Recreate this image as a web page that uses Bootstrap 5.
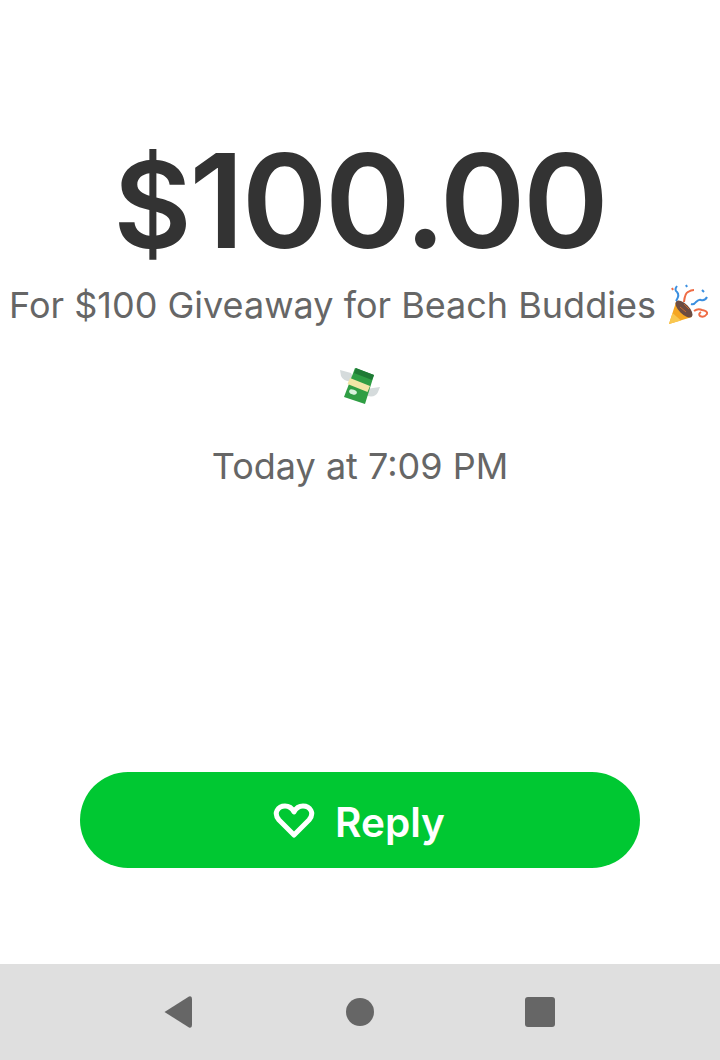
<!DOCTYPE html>
<html lang="en">
<head>
    <meta charset="UTF-8">
    <title>Payment</title>
    <link href="https://cdn.jsdelivr.net/npm/bootstrap@5.3.0/dist/css/bootstrap.min.css" rel="stylesheet">
    <style>
        body {
            background-color: #fff;
            font-family: Inter, "Liberation Sans", sans-serif;
            height: 1060px;
            overflow: hidden;
        }
        .screen-body { height: 964px; padding-top: 129px; }
        .amount {
            color: #333;
            font-size: 130px;
            font-weight: 600;
            line-height: 144px;
            height: 144px;
            letter-spacing: -2.5px;
        }
        .amount-sign { font-size: 120px; }
        .note {
            color: #666;
            font-size: 36px;
            line-height: 44px;
            white-space: nowrap;
            margin-top: 10px;
            gap: 11px;
        }
        .money-row { margin-top: 39px; height: 40px; }
        .when { color: #666; font-size: 36px; line-height: 44px; margin-top: 38px; }
        .reply-btn {
            width: 560px;
            height: 96px;
            border-radius: 48px;
            background-color: #00c832;
            border: none;
            color: #fff;
            font-size: 40.5px;
            font-weight: 600;
            gap: 20px;
            margin-top: auto;
            margin-bottom: 96px;
        }
        .reply-btn span { padding-top: 6px; }
        .reply-btn svg { margin-top: 2px; margin-left: -2px; }
        .sys-nav { height: 96px; background-color: #dfdfdf; }
    </style>
</head>
<body>
    <div class="screen-body d-flex flex-column align-items-center text-center">
        <div class="amount"><span class="amount-sign">$</span>100.00</div>
        <div class="note d-flex align-items-center">
            <span>For $100 Giveaway for Beach Buddies</span>
            <svg width="44" height="44" viewBox="0 0 44 44">
                <path d="M2 41 L9 19 L25 34 Z" fill="#f5a623"/>
                <path d="M2 41 L5.500 30 L14 37.500 Z" fill="#f9c74f"/>
                <ellipse cx="17" cy="26" rx="5" ry="11" transform="rotate(-45 17 26)" fill="#6d4c41"/>
                <path d="M13 24 l6 5 M17 21 l5 5" stroke="#c96a2c" stroke-width="1" fill="none"/>
                <path d="M10 3 q-3 4 0 6 q3 3 -1 9 M19 2 l1 2 M35 7 l2 2" stroke="#3a8fe0" stroke-width="2" fill="none"/>
                <path d="M5 5 l1 2" stroke="#ef6c45" stroke-width="2" fill="none"/>
                <path d="M17 19 q1 -9 4 -10 q3 -2 6 -2" stroke="#ef6c45" stroke-width="2" fill="none"/>
                <path d="M24 21 q3 1 5 -2 q3 -3 5 -2 q4 1 6 -3" stroke="#3a8fe0" stroke-width="2" fill="none"/>
                <path d="M27 28 q4 -3 8 -1 q6 1 5 4 q-3 4 -7 2 q-2 -2 1 -4" stroke="#ef6c45" stroke-width="2" fill="none"/>
            </svg>
        </div>
        <div class="money-row">
            <svg width="44" height="40" viewBox="0 0 44 40">
                <path d="M2 4 L13 7 L17 15 Q6 17 3 10 Z" fill="#d5dbdc"/>
                <path d="M42 21 L28 23 L26 29 Q37 33 40 26 Z" fill="#d5dbdc"/>
                <path d="M17 2 L36 9 L27 38 L6 31 Z" fill="#2f9e44"/>
                <path d="M18 2 L36 9 L34 14 L16 7 Z" fill="#1f7a35"/>
                <path d="M12 12 L32 20 L29.500 26 L9.500 18 Z" fill="#f2e6a6"/>
                <ellipse cx="15" cy="26" rx="4" ry="2.500" fill="#d8f3dc" transform="rotate(20 15 26)"/>
            </svg>
        </div>
        <div class="when">Today at 7:09 PM</div>
        <button class="reply-btn btn d-flex align-items-center justify-content-center" type="button">
            <svg width="42" height="36" viewBox="0 0 42 36">
                <path d="M21 32 L6 17 C0 10 5 3 12 3 C16 3 19 5 21 9 C23 5 26 3 30 3 C37 3 42 10 36 17 Z" fill="none" stroke="#fff" stroke-width="5" stroke-linejoin="round"/>
            </svg>
            <span>Reply</span>
        </button>
    </div>
    <div class="sys-nav">
        <svg class="d-block" width="720" height="96" viewBox="0 0 720 96">
            <path d="M164.500 48 L189 32.500 Q192 31.500 192 35 L192 61 Q192 64.500 189 63.500 Z" fill="#666"/>
            <circle cx="360" cy="48" r="14" fill="#666"/>
            <rect x="525" y="33" width="30" height="30" rx="3" fill="#666"/>
        </svg>
    </div>
    <script src="https://cdn.jsdelivr.net/npm/bootstrap@5.3.0/dist/js/bootstrap.bundle.min.js"></script>
</body>
</html>
